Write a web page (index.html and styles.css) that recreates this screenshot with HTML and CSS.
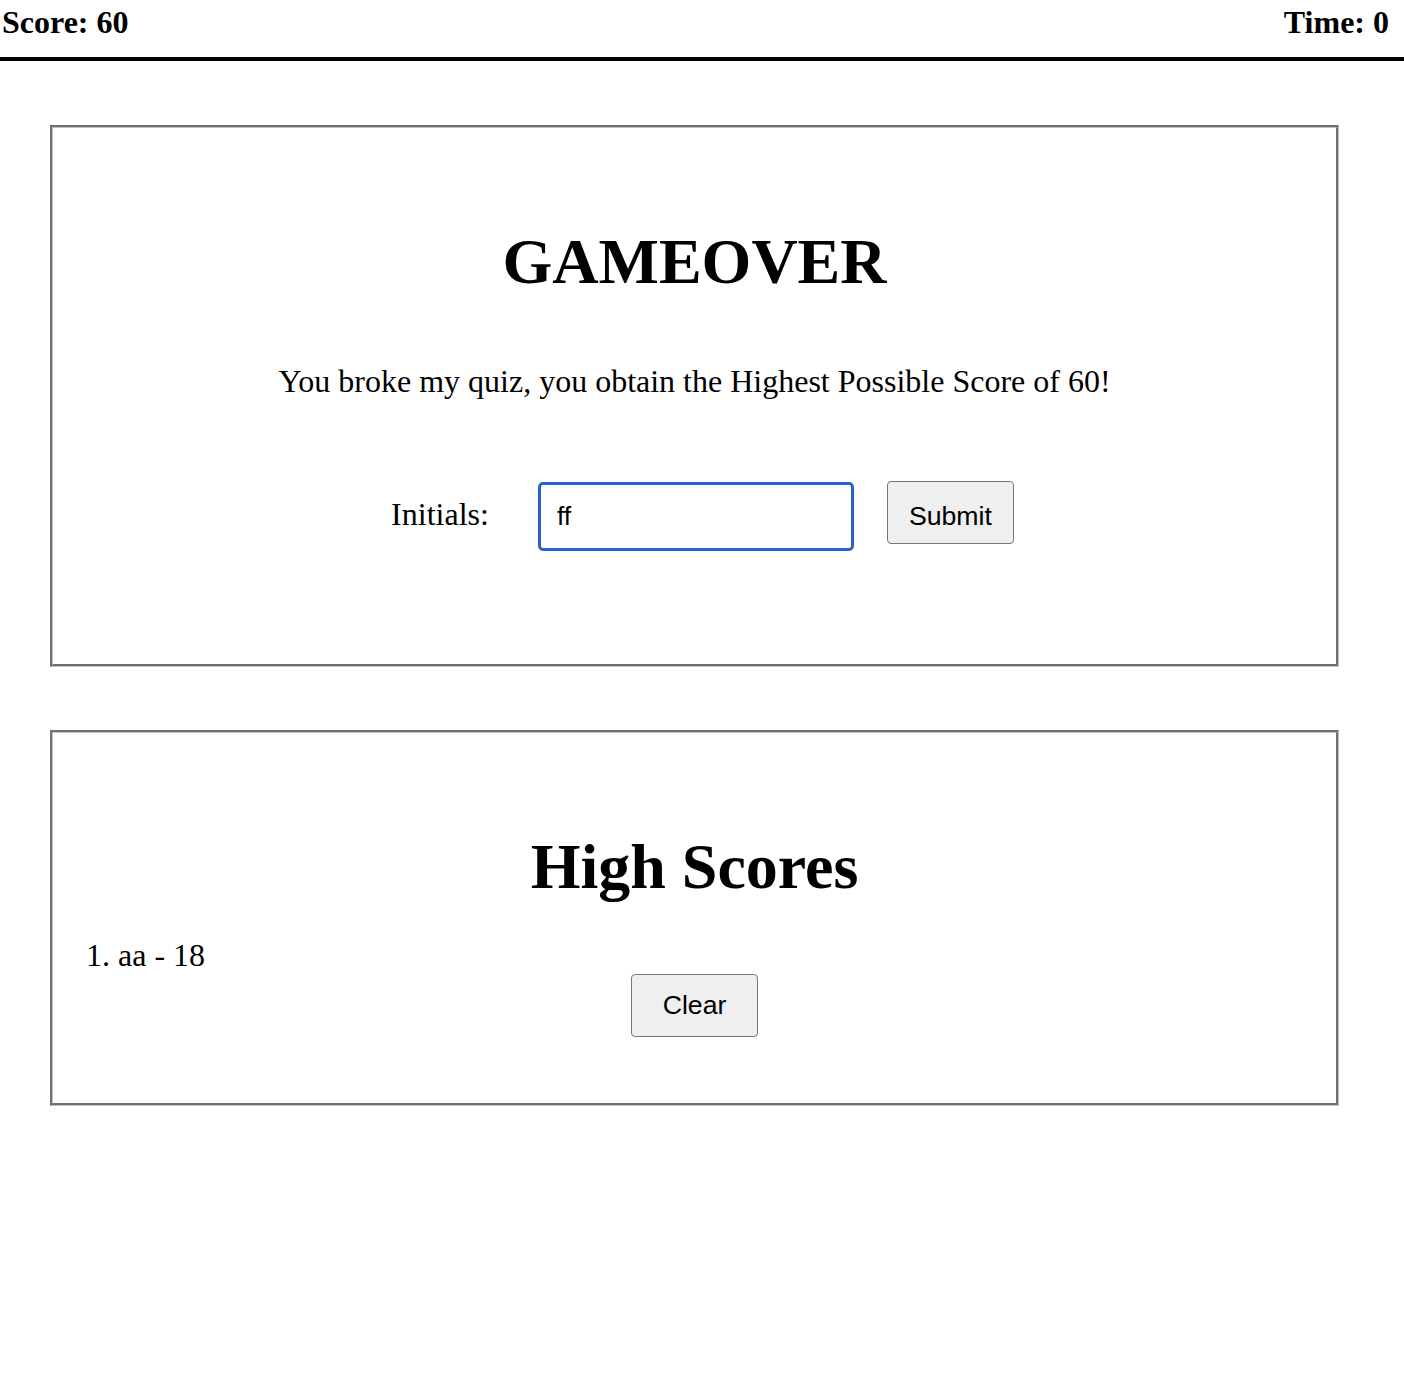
FILE: index.html
```html
<!DOCTYPE html>
<html lang="en">
<head>
<meta charset="utf-8">
<title>Quiz - Game Over</title>
<link rel="stylesheet" href="styles.css">
</head>
<body>
<header class="topbar">
  <h1 class="stat">Score: 60</h1>
  <h1 class="stat">Time: 0</h1>
</header>
<main class="page">
  <section class="card card-over">
    <h1 class="title">GAMEOVER</h1>
    <p class="message">You broke my quiz, you obtain the Highest Possible Score of 60!</p>
    <form class="entry" onsubmit="return false;">
      <label class="entry-label" for="initials">Initials:</label>
      <input class="entry-input" id="initials" type="text" value="ff">
      <button class="btn btn-submit" type="submit">Submit</button>
    </form>
  </section>
  <section class="card card-scores">
    <h1 class="title">High Scores</h1>
    <ol class="scores">
      <li>aa - 18</li>
    </ol>
    <div class="actions">
      <button class="btn" type="button">Clear</button>
    </div>
  </section>
</main>
</body>
</html>
```
FILE: styles.css
```css
html, body {
  margin: 0;
  padding: 0;
  background: #ffffff;
  color: #000000;
  font-family: "Liberation Serif", "Times New Roman", serif;
}

.topbar {
  display: flex;
  justify-content: space-between;
  align-items: baseline;
  padding: 4px 15px 16px 2px;
  border-bottom: 4px solid #000000;
}

.stat {
  margin: 0;
  font-size: 32px;
  font-weight: bold;
  line-height: normal;
}

.page {
  display: flex;
  flex-direction: column;
  gap: 63px;
  margin: 64px 65px 0 50px;
}

.card {
  border: 3px groove #c4c4c4;
  text-align: center;
}

.card-over {
  padding: 97px 0 113px;
}

.card-scores {
  padding: 97px 0 65.7px;
}

.title {
  margin: 0;
  font-size: 64px;
  font-weight: bold;
  line-height: normal;
}

.message {
  margin: 63.6px 0 0;
  font-size: 32px;
  line-height: normal;
}

.entry {
  display: flex;
  justify-content: center;
  align-items: baseline;
  margin-top: 81px;
  padding-left: 16px;
}

.entry-label {
  font-size: 32px;
  margin-right: 49px;
}

.entry-input {
  box-sizing: border-box;
  width: 316px;
  height: 69px;
  margin: 0 33px 0 0;
  padding: 0 16px;
  border: 3px solid #2962c9;
  border-radius: 5px;
  outline: none;
  background: #ffffff;
  color: #000000;
  font-family: "Liberation Sans", Arial, sans-serif;
  font-size: 26.67px;
}

.btn {
  box-sizing: border-box;
  width: 127px;
  height: 63px;
  margin: 0;
  padding: 0 10px;
  border: 1px solid #767676;
  border-radius: 4px;
  background: #efefef;
  color: #000000;
  font-family: "Liberation Sans", Arial, sans-serif;
  font-size: 26.67px;
  line-height: normal;
}

.btn-submit {
  padding-top: 8px;
}

.scores {
  margin: 33.6px 0 0;
  padding: 0 0 0 33px;
  list-style-position: inside;
  text-align: left;
  font-size: 32px;
  line-height: normal;
}

.actions {
  display: flex;
  justify-content: center;
}
```
